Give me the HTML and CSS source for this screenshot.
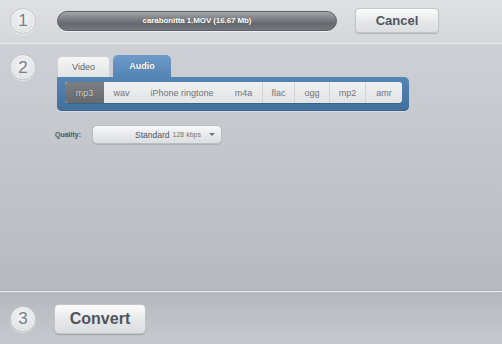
FILE: index.html
```html
<!DOCTYPE html>
<html>
<head>
<meta charset="utf-8">
<link rel="stylesheet" href="styles.css">
</head>
<body>
<div class="app">
  <section class="top">
    <div class="step">1</div>
    <div class="progress">carabonitta 1.MOV (16.67 Mb)</div>
    <button class="btn cancel">Cancel</button>
  </section>
  <section class="main">
    <div class="step">2</div>
    <div class="content">
      <div class="tabs">
        <div class="tab video">Video</div>
        <div class="tab audio">Audio</div>
      </div>
      <div class="panel">
        <div class="formats">
          <span class="fmt sel">mp3</span>
          <span class="fmt">wav</span>
          <span class="fmt">iPhone ringtone</span>
          <span class="fmt">m4a</span>
          <span class="fmt div">flac</span>
          <span class="fmt div">ogg</span>
          <span class="fmt div">mp2</span>
          <span class="fmt div">amr</span>
        </div>
      </div>
      <div class="quality">
        <span class="qlabel">Quality:</span>
        <div class="select">
          <span class="std">Standard</span>
          <span class="kbps">128 kbps</span>
          <span class="arrow"></span>
        </div>
      </div>
    </div>
  </section>
  <section class="bottom">
    <div class="step">3</div>
    <button class="btn convert">Convert</button>
  </section>
</div>
</body>
</html>
```
FILE: styles.css
```css
html, body {
  margin: 0;
  padding: 0;
}
body {
  width: 502px;
  height: 344px;
  overflow: hidden;
  font-family: "Liberation Sans", Arial, sans-serif;
  background: #c4c7cb;
}
.app {
  display: flex;
  flex-direction: column;
  width: 502px;
  height: 344px;
}
.step {
  width: 24px;
  height: 24px;
  border-radius: 50%;
  flex: none;
  margin-left: 10px;
  background: radial-gradient(circle at 50% 40%, #f4f5f6 0%, #e4e5e7 60%, #d2d4d7 100%);
  border: 1px solid #c3c6ca;
  box-shadow: inset 0 0 0 1px rgba(255,255,255,0.7), 0 1px 0 rgba(255,255,255,0.5);
  display: flex;
  align-items: center;
  justify-content: center;
  color: #7a7f86;
  font-size: 17px;
  line-height: 1;
}
.top {
  display: flex;
  align-items: center;
  background: linear-gradient(#dfe0e3, #d4d6d9);
  border-bottom: 1px solid #e8e9eb;
  box-sizing: border-box;
  height: 44px;
  padding-bottom: 2px;
}
.progress {
  margin-left: 21px;
  width: 280px;
  height: 20px;
  box-sizing: border-box;
  border-radius: 10px;
  border: 1px solid #5d6065;
  background: linear-gradient(#a3a6aa 0%, #808388 35%, #65686d 65%, #75787d 100%);
  box-shadow: 0 1px 0 rgba(255,255,255,0.6);
  color: #ffffff;
  font-size: 8px;
  font-weight: bold;
  text-align: center;
  line-height: 18px;
  text-shadow: 0 0 1px rgba(0,0,0,0.4);
  letter-spacing: -0.1px;
}
.btn {
  font-family: "Liberation Sans", Arial, sans-serif;
  font-weight: bold;
  color: #4f555c;
  background: linear-gradient(#fcfcfc, #e6e7e9 55%, #dcdee0);
  border: 1px solid #c3c5c9;
  border-radius: 4px;
  box-shadow: 0 1px 1px rgba(0,0,0,0.18);
  padding: 0;
  margin: 0;
}
.cancel {
  margin-left: 18px;
  width: 84px;
  height: 25px;
  font-size: 13px;
}
.main {
  height: 247px;
  display: flex;
  align-items: flex-start;
  padding-top: 10px;
  box-sizing: border-box;
  background: linear-gradient(#cdd0d4, #b6bac0);
}
.content {
  margin-left: 21px;
  padding-top: 1px;
  display: flex;
  flex-direction: column;
}
.tabs {
  display: flex;
  align-items: flex-end;
  height: 22px;
}
.tab {
  box-sizing: border-box;
  border-radius: 5px 5px 0 0;
  font-size: 9px;
  display: flex;
  align-items: center;
  justify-content: center;
}
.video {
  width: 53px;
  height: 21px;
  background: linear-gradient(#f6f6f6, #e2e3e4);
  border: 1px solid #cfd0d2;
  border-bottom: none;
  color: #5d636a;
}
.audio {
  margin-left: 3px;
  width: 58px;
  height: 22px;
  background: linear-gradient(#6c9bca, #5585b4);
  color: #ffffff;
  font-weight: bold;
  text-shadow: 0 0 1px rgba(0,0,0,0.3);
}
.panel {
  width: 352px;
  height: 34px;
  box-sizing: border-box;
  padding: 5px 7px 0 8px;
  background: linear-gradient(#5585b4, #426f9b);
  border-radius: 0 5px 5px 5px;
  box-shadow: inset 0 -1px 0 #3b6690, 0 1px 0 rgba(255,255,255,0.3);
}
.formats {
  display: flex;
  height: 21px;
  border-radius: 3px;
  background: linear-gradient(#f0f1f2, #e1e3e6);
  overflow: hidden;
  box-shadow: 0 1px 0 rgba(0,0,0,0.15);
}
.fmt {
  display: flex;
  align-items: center;
  justify-content: center;
  font-size: 9px;
  color: #6f747b;
  padding: 0 9px;
  box-sizing: border-box;
}
.fmt:nth-child(1) { width: 39px; }
.fmt:nth-child(2) { width: 35px; }
.fmt:nth-child(3) { width: 86px; }
.fmt:nth-child(4) { width: 37px; }
.fmt:nth-child(5) { width: 32px; }
.fmt:nth-child(6) { width: 35px; }
.fmt:nth-child(7) { width: 36px; }
.fmt:nth-child(8) { width: 37px; }
.fmt.div {
  border-left: 1px solid #cfd2d6;
}
.fmt.sel {
  background: linear-gradient(#7c7f84, #66696e);
  color: #d6d7d9;
  text-shadow: 0 0 1px rgba(0,0,0,0.5);
  border-radius: 3px 0 0 3px;
}
.quality {
  margin-top: 14px;
  display: flex;
  align-items: center;
  margin-left: -2px;
}
.qlabel {
  font-size: 7px;
  font-weight: bold;
  color: #4f555c;
  width: 37px;
}
.select {
  width: 130px;
  height: 19px;
  box-sizing: border-box;
  border: 1px solid #b9bcc0;
  border-radius: 5px;
  background: linear-gradient(#f8f8f9, #e6e7e9 60%, #dcdee1);
  box-shadow: 0 1px 1px rgba(0,0,0,0.12);
  display: flex;
  align-items: center;
  justify-content: flex-end;
  padding-right: 6px;
  color: #4f555c;
}
.std {
  font-size: 8.5px;
}
.kbps {
  font-size: 7px;
  margin-left: 3px;
  color: #6d737a;
}
.arrow {
  margin-left: 8px;
  width: 0;
  height: 0;
  border-left: 3px solid transparent;
  border-right: 3px solid transparent;
  border-top: 3px solid #6d737a;
}
.bottom {
  flex: 1;
  display: flex;
  align-items: center;
  border-top: 1px solid #eceef0;
  box-shadow: 0 -1px 0 #a9aeb4;
  background: linear-gradient(#b5b9bf, #c6c9cd);
  padding-top: 1px;
}
.convert {
  margin-left: 18px;
  width: 92px;
  height: 30px;
  font-size: 16px;
  border-radius: 5px;
}
```
